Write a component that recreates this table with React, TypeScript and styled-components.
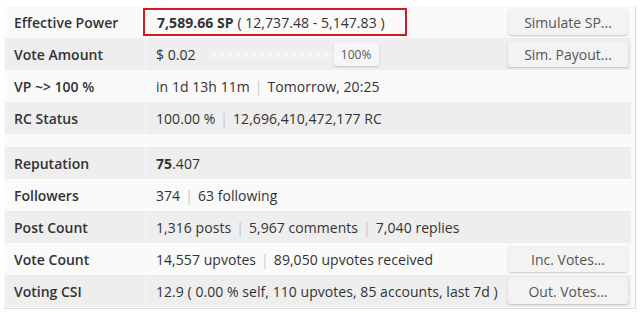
import React from "react";
import styled, { createGlobalStyle } from "styled-components";

const Global = createGlobalStyle`
  html, body {
    margin: 0;
    padding: 0;
    background: #ffffff;
  }
  body {
    font-family: "Open Sans", "Noto Sans", Arial, sans-serif;
    font-size: 14px;
    color: #333;
  }
`;

//===============================
// @Styled
//===============================
const Panel = styled.div`
  margin: 6px 4px 0 4px;
  width: 632px;
  box-sizing: border-box;
  padding: 0 4px 1px 1px;
  background: #fafafa;
  border-right: 1px solid #dcdcdc;
  border-bottom: 1px solid #dcdcdc;
`;

const Group = styled.div`
  display: flex;
  flex-direction: column;
`;

const Spacer = styled.div`
  height: 13px;
`;

const Row = styled.div<{ $striped: boolean }>`
  display: grid;
  grid-template-columns: 141px 1fr 128px;
  align-items: center;
  height: 32px;
  background: ${(p) => (p.$striped ? "#eeeeee" : "#fafafa")};
`;

const Label = styled.div`
  font-weight: 600;
  padding-left: 9px;
  height: 100%;
  display: flex;
  align-items: center;
  border-right: 1px solid #f7f7f7;
  white-space: nowrap;
`;

const Value = styled.div<{ $framed?: boolean }>`
  display: flex;
  align-items: center;
  padding-left: ${(p) => (p.$framed ? "0" : "10px")};
  white-space: pre;
  height: 100%;
  letter-spacing: 0.05px;
  b {
    font-weight: 700;
  }
`;

const Framed = styled.span`
  display: flex;
  align-items: center;
  height: 28px;
  box-sizing: border-box;
  border: 2px solid #d71920;
  padding: 0 20px 0 12px;
  margin-left: -3px;
  white-space: pre;
`;

const Bar = styled.span`
  color: #c8c8c8;
  margin: 0 5px;
`;

const Slider = styled.span`
  position: relative;
  display: inline-flex;
  align-items: center;
  margin-left: 10px;
  width: 176px;
  height: 24px;
`;

const Track = styled.span`
  display: block;
  width: 130px;
  height: 5px;
  border-radius: 2px;
  background: repeating-linear-gradient(
    90deg,
    #f1f1f1 0 6px,
    #fbfbfb 6px 8px
  );
  border: 1px solid #efefef;
`;

const Knob = styled.span`
  position: absolute;
  left: 128px;
  top: 0;
  width: 45px;
  height: 24px;
  display: flex;
  align-items: center;
  justify-content: center;
  background: #f7f7f7;
  border-radius: 3px;
  box-shadow: 0 1px 2px rgba(0, 0, 0, 0.18);
  font-size: 12px;
  color: #555;
`;

const Action = styled.div`
  display: flex;
  justify-content: flex-end;
  align-items: center;
  padding-right: 3px;
`;

const Button = styled.button`
  width: 120px;
  height: 26px;
  border: none;
  border-radius: 3px;
  background: #f3f3f3;
  box-shadow: 0 1px 2px rgba(0, 0, 0, 0.2);
  font-family: "Open Sans", "Noto Sans", Arial, sans-serif;
  font-size: 14px;
  color: #555;
  padding: 0;
  cursor: pointer;
`;

//===============================
// @Data
//===============================
type RowData = {
  label: string;
  value: React.ReactNode;
  action?: string;
  highlight?: boolean;
};

const Sep = () => <Bar>|</Bar>;

const rowsTop: RowData[] = [
  {
    label: "Effective Power",
    value: (
      <Framed>
        <b>7,589.66 SP</b> ( 12,737.48 - 5,147.83 )
      </Framed>
    ),
    action: "Simulate SP...",
    highlight: true,
  },
  {
    label: "Vote Amount",
    value: (
      <>
        $ 0.02
        <Slider>
          <Track />
          <Knob>100%</Knob>
        </Slider>
      </>
    ),
    action: "Sim. Payout...",
  },
  {
    label: "VP ~> 100 %",
    value: (
      <>
        in 1d 13h 11m<Sep />Tomorrow, 20:25
      </>
    ),
  },
  {
    label: "RC Status",
    value: (
      <>
        100.00 %<Sep />12,696,410,472,177 RC
      </>
    ),
  },
];

const rowsBottom: RowData[] = [
  {
    label: "Reputation",
    value: (
      <>
        <b>75</b>.407
      </>
    ),
  },
  {
    label: "Followers",
    value: (
      <>
        374<Sep />63 following
      </>
    ),
  },
  {
    label: "Post Count",
    value: (
      <>
        1,316 posts<Sep />5,967 comments<Sep />7,040 replies
      </>
    ),
  },
  {
    label: "Vote Count",
    value: (
      <>
        14,557 upvotes<Sep />89,050 upvotes received
      </>
    ),
    action: "Inc. Votes...",
  },
  {
    label: "Voting CSI",
    value: <>12.9 ( 0.00 % self, 110 upvotes, 85 accounts, last 7d )</>,
    action: "Out. Votes...",
  },
];

//===============================
// @Component
//===============================
const Section: React.FC<{ rows: RowData[]; startStriped?: boolean }> = ({
  rows,
  startStriped = false,
}) => (
  <Group>
    {rows.map((r, i) => (
      <Row key={r.label} $striped={(i % 2 === 1) !== startStriped}>
        <Label>{r.label}</Label>
        <Value $framed={r.highlight}>{r.value}</Value>
        <Action>{r.action && <Button>{r.action}</Button>}</Action>
      </Row>
    ))}
  </Group>
);

const App: React.FC = () => (
  <>
    <Global />
    <Panel>
      <Section rows={rowsTop} />
      <Spacer />
      <Section rows={rowsBottom} startStriped />
    </Panel>
  </>
);

export default App;
